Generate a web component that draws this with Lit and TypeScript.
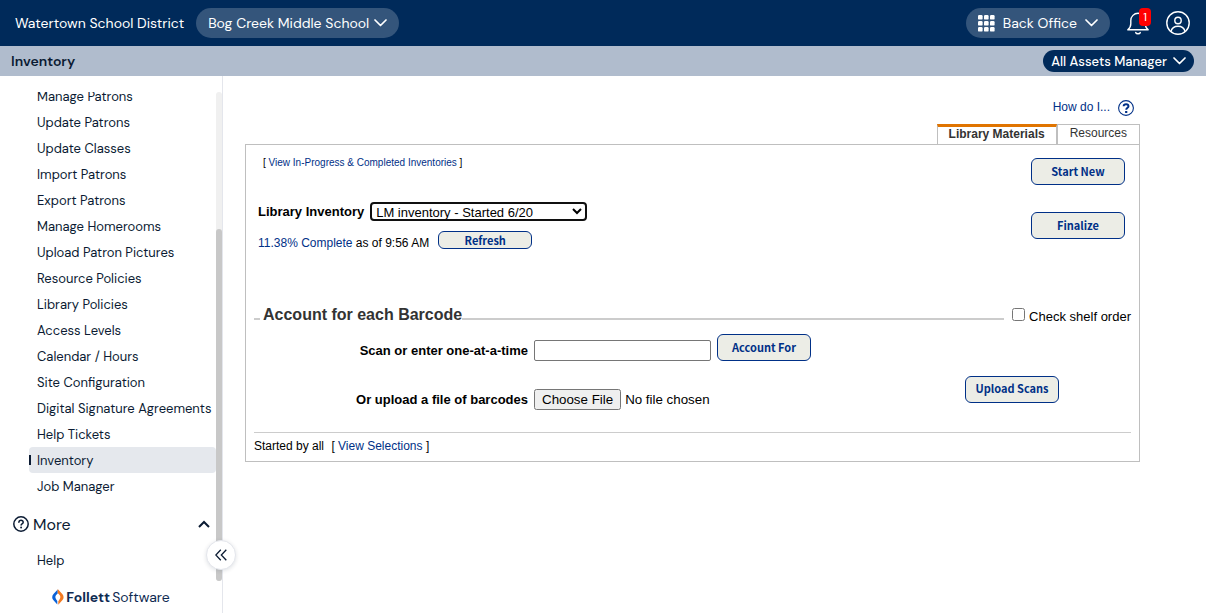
import { LitElement, html, css, svg } from "lit";
import { customElement, property, state } from "lit/decorators.js";
import { classMap } from "lit/directives/class-map.js";

const chevronDown = html`<svg class="chevron" width="13" height="8" viewBox="0 0 13 8" aria-hidden="true">
  <path d="M1 1l5.500 5.500L12 1" fill="none" stroke="currentColor" stroke-width="1.700" stroke-linecap="round" stroke-linejoin="round" />
</svg>`;

const gridDots = [0, 6, 12].map((y) => [0, 6, 12].map((x) => svg`<rect x=${x} y=${y} width="4.600" height="4.600" rx="1.200" />`));

@customElement("app-header")
class AppHeader extends LitElement {
  static styles = css`
    :host {
      display: block;
      font-family: "DM Sans", "Inter", sans-serif;
      font-size: 14px;
      color: #fff;
    }
    .top {
      display: flex;
      align-items: center;
      height: 46px;
      padding: 0 16px 0 15px;
      background: #002a5a;
    }
    .pill {
      display: flex;
      align-items: center;
      gap: 5px;
      height: 30px;
      border: 0;
      border-radius: 15px;
      padding: 0 12px;
      background: #34557b;
      color: inherit;
      font: inherit;
      white-space: nowrap;
    }
    .district { margin-right: 12px; white-space: nowrap; }
    .office { margin-left: auto; gap: 8px; }
    .icon-button {
      position: relative;
      display: flex;
      border: 0;
      padding: 0;
      background: none;
      color: inherit;
    }
    .bell { margin: 0 16px; }
    .badge {
      position: absolute;
      top: -3px;
      right: -1px;
      width: 12px;
      height: 18px;
      border-radius: 4px;
      background: #f00;
      font: 12px/18px "DM Sans", "Inter", sans-serif;
      text-align: center;
    }
    .sub {
      display: flex;
      align-items: center;
      justify-content: space-between;
      height: 30px;
      padding: 0 12px 0 11px;
      background: #b0bccd;
    }
    .title {
      margin: 0;
      color: #0b1b33;
      font-size: 14px;
      font-weight: 600;
    }
    .role {
      gap: 6px;
      height: 22px;
      padding: 0 8px;
      background: #002a5a;
      font-size: 13px;
      font-weight: 500;
    }
  `;

  render() {
    return html`
      <header class="top">
        <span class="district">Watertown School District</span>
        <button class="pill">Bog Creek Middle School ${chevronDown}</button>
        <button class="pill office">
          <svg width="17" height="17" viewBox="0 0 17 17" fill="currentColor" aria-hidden="true">${gridDots}</svg>
          Back Office ${chevronDown}
        </button>
        <button class="icon-button bell" aria-label="Notifications">
          <svg width="24" height="24" viewBox="0 0 24 24" fill="none" stroke="currentColor" stroke-width="1.400" stroke-linecap="round" stroke-linejoin="round" aria-hidden="true">
            <path d="M1.800 18.800h20.400c-1.900-1.500-2.900-3.200-2.900-6V9.500a7.200 7.200 0 0 0-14.500 0v3.300c0 2.800-1.100 4.500-3 6z" />
            <path d="M9.700 21.600c.7 1.500 3.900 1.500 4.600 0" />
          </svg>
          <span class="badge">1</span>
        </button>
        <button class="icon-button" aria-label="Account">
          <svg width="24" height="24" viewBox="0 0 24 24" fill="none" stroke="currentColor" stroke-width="1.400" aria-hidden="true">
            <circle cx="12" cy="12" r="11.200" />
            <circle cx="12" cy="9.500" r="3.200" />
            <path d="M4.900 20.500c.9-3.500 3.600-5.200 7.100-5.200s6.200 1.700 7.100 5.200" />
          </svg>
        </button>
      </header>
      <div class="sub">
        <h1 class="title">Inventory</h1>
        <button class="pill role">All Assets Manager ${chevronDown}</button>
      </div>
    `;
  }
}

@customElement("app-sidebar")
class AppSidebar extends LitElement {
  @property({ type: Array }) items: string[] = [];
  @property() current = "";

  static styles = css`
    :host {
      position: relative;
      display: flex;
      flex-direction: column;
      box-sizing: border-box;
      flex: 0 0 223px;
      border-right: 1px solid #e4e6ec;
      padding-top: 16px;
      font-family: "DM Sans", "Inter", sans-serif;
      font-size: 13px;
      color: #0b1b33;
    }
    .scroller { display: flex; flex: 1; min-height: 0; }
    .nav {
      display: flex;
      flex: 1;
      flex-direction: column;
      justify-content: flex-end;
      overflow: hidden;
      padding-bottom: 8px;
    }
    .list { flex: none; margin: 0 0 0 29px; padding: 0; list-style: none; }
    .link {
      display: flex;
      align-items: center;
      height: 26px;
      padding-left: 8px;
      border-radius: 4px;
      color: inherit;
      text-decoration: none;
      white-space: nowrap;
    }
    .active {
      padding-left: 0;
      background: #e5e8ed;
    }
    .active::before {
      content: "";
      width: 2px;
      height: 10px;
      margin-right: 6px;
      background: #0b1b33;
    }
    .more {
      display: flex;
      flex: none;
      align-items: center;
      gap: 4px;
      height: 36px;
      margin: 7px 0 5px;
      border: 0;
      padding: 0 6px 0 13px;
      background: none;
      color: inherit;
      font: inherit;
      font-size: 16px;
    }
    .up { margin-left: auto; }
    .track {
      display: flex;
      align-items: flex-end;
      width: 6px;
      border-radius: 3px;
      background: #f0f0f0;
    }
    .thumb { width: 6px; height: 72%; border-radius: 3px; background: #c8c8c8; }
    .collapse {
      position: absolute;
      right: -14px;
      bottom: 43px;
      display: flex;
      align-items: center;
      justify-content: center;
      width: 30px;
      height: 30px;
      border: 1px solid #e4e6ec;
      border-radius: 50%;
      padding: 0;
      background: #fff;
      box-shadow: 0 1px 4px #0b1b3322;
      color: #0b1b33;
    }
    .brand {
      display: flex;
      align-items: center;
      justify-content: center;
      gap: 2px;
      height: 32px;
      color: #0f2b52;
      font-size: 14px;
    }
    .bold { font-weight: 700; }
  `;

  render() {
    return html`
      <div class="scroller">
        <nav class="nav">
          <ul class="list">
            ${this.items.map(
              (item) => html`<li><a href="#" class=${classMap({ link: true, active: item === this.current })}>${item}</a></li>`
            )}
          </ul>
          <button class="more">
            <svg width="16" height="16" viewBox="0 0 16 16" fill="none" stroke="currentColor" stroke-width="1.500" stroke-linecap="round" aria-hidden="true">
              <circle cx="8" cy="8" r="7.200" />
              <path d="M5.900 6.300c.2-2.600 4.300-2.600 4.300-.1 0 1.500-2.100 1.600-2.100 2.800" />
              <path d="M8.100 11.500v.1" stroke-width="1.900" />
            </svg>
            More
            <svg class="up" width="12" height="8" viewBox="0 0 12 8" aria-hidden="true">
              <path d="M1 7l5-5 5 5" fill="none" stroke="currentColor" stroke-width="2" />
            </svg>
          </button>
          <ul class="list">
            <li><a class="link" href="#">Help</a></li>
          </ul>
        </nav>
        <div class="track"><div class="thumb"></div></div>
      </div>
      <div class="brand">
        <svg width="12" height="16" viewBox="0 0 12 16" aria-hidden="true">
          <path d="M5.700.6L1.500 4.900c-1.700 2-1.700 4.300-.2 6.200L5.300 15.400V12L4.100 10.200c-1-1.500-1-2.800 0-4.100L5.700 4.400z" fill="#0a62d8" />
          <path d="M5.700 0l4.600 4.900c1.700 2 1.700 4.300.2 6.200L6.300 15.800V12.300l1.300-2.100c1-1.500 1-2.800 0-4.100L5.700 3.900z" fill="#f47a20" />
        </svg>
        <span class="bold">Follett</span><span>Software</span>
      </div>
      <button class="collapse" aria-label="Collapse menu">
        <svg width="12" height="12" viewBox="0 0 12 12" fill="none" stroke="currentColor" stroke-width="1.300" aria-hidden="true">
          <path d="M5.800.7L.8 6l5 5.300M11.300.7L6.300 6l5 5.300" />
        </svg>
      </button>
    `;
  }
}

@customElement("inventory-panel")
class InventoryPanel extends LitElement {
  @state() private tab = "Library Materials";

  static styles = css`
    :host {
      display: block;
      flex: 1;
      min-width: 0;
      padding: 20px 66px 20px 22px;
      font-family: "Liberation Sans", Arial, sans-serif;
      font-size: 12px;
      color: #000;
    }
    a { color: #003087; text-decoration: none; }
    .help {
      display: flex;
      align-items: center;
      justify-content: flex-end;
      gap: 8px;
      height: 22px;
      padding-right: 6px;
    }
    .help-icon { margin-top: 2px; }
    .tabs { display: flex; justify-content: flex-end; margin-top: 6px; }
    .tab {
      height: 20px;
      border: 1px solid #bfbfbf;
      border-bottom: 0;
      padding: 0 12px 4px;
      background: #fff;
      color: #333;
      font: 12px "Liberation Sans", Arial, sans-serif;
    }
    .selected {
      border-top: 3px solid #e07400;
      padding: 0 11px 6px;
      font-weight: 700;
    }
    .panel { border: 1px solid #bfbfbf; padding: 13px 8px 0; }
    .intro { display: flex; justify-content: space-between; padding-right: 6px; }
    .progress { font-size: 10px; line-height: 10px; padding-left: 9px; }
    .chooser { display: flex; align-items: center; gap: 6px; margin: 34px 0 10px 4px; }
    .label { font-size: 13px; font-weight: 700; }
    .select {
      width: 217px;
      height: 19px;
      border: 2px solid #101010;
      border-radius: 4px;
      padding: 0;
      background: #fff;
      color: #000;
      font: 13px "Liberation Sans", Arial, sans-serif;
    }
    .status { display: flex; align-items: flex-end; gap: 9px; margin-left: 4px; line-height: 12px; }
    .actions { display: flex; flex-direction: column; gap: 27px; }
    .button {
      box-sizing: border-box;
      width: 94px;
      height: 27px;
      border: 1px solid #003087;
      border-radius: 6px;
      padding: 0 0 2px;
      background: #ecede6;
      color: #003087;
      font: 700 11px/16px "Noto Sans CJK SC", "Noto Sans", sans-serif;
    }
    .short { height: 18px; padding: 0; }
    .heading { display: flex; align-items: center; height: 24px; margin-top: 52px; }
    .legend { margin: 4px 0 0 3px; color: #333; font-size: 16px; font-weight: 700; }
    .rule { flex: 1; height: 2px; margin-top: 11px; background: #ccc; }
    .lead { flex: 0 0 6px; }
    .shelf { display: flex; align-items: center; gap: 4px; margin: 6px 0 0 8px; font-size: 13px; }
    .check { width: 13px; height: 13px; margin: 0 0 4px; }
    .row {
      display: grid;
      grid-template-columns: 274px auto 1fr;
      align-items: center;
      column-gap: 6px;
      margin-top: 9px;
    }
    .upload { margin-top: 7px; padding-right: 72px; }
    .row .label { text-align: right; }
    .text {
      box-sizing: border-box;
      width: 177px;
      height: 21px;
      border: 1px solid #767676;
      border-radius: 2px;
      margin-top: 6px;
      padding: 1px 2px;
      font: 13px "Liberation Sans", Arial, sans-serif;
    }
    .scan-label { margin-top: 6px; }
    .file { width: 200px; margin-top: 21px; font-family: "Liberation Sans", Arial, sans-serif; }
    .file-label { margin-top: 21px; }
    .end { justify-self: end; }
    .footer {
      margin-top: 22px;
      border-top: 1px solid #ccc;
      padding: 6px 0 8px;
      line-height: 14px;
    }
    .gap { margin-left: 4px; }
  `;

  render() {
    return html`
      <div class="help">
        <a href="#">How do I...</a>
        <svg class="help-icon" width="16" height="16" viewBox="0 0 16 16" fill="none" stroke="#003087" aria-hidden="true">
          <circle cx="8" cy="8" r="7.400" stroke-width="1.100" />
          <path d="M5.600 6.200c.2-2.700 4.900-2.600 4.900 0C10.500 7.700 8.200 7.700 8.200 9.800" stroke-width="1.900" />
          <path d="M7.100 12h2.200" stroke-width="2" />
        </svg>
      </div>
      <div class="tabs" role="tablist">
        ${["Library Materials", "Resources"].map(
          (name) => html`<button
            role="tab"
            class=${classMap({ tab: true, selected: name === this.tab })}
            aria-selected=${name === this.tab}
            @click=${() => (this.tab = name)}
          >${name}</button>`
        )}
      </div>
      <section class="panel">
        <div class="intro">
          <div>
            <div class="progress">[ <a href="#">View In-Progress &amp; Completed Inventories</a> ]</div>
            <div class="chooser">
              <label class="label" for="inventory">Library Inventory</label>
              <select class="select" id="inventory">
                <option>LM inventory - Started 6/20</option>
              </select>
            </div>
            <div class="status">
              <span><a href="#">11.38% Complete</a> as of 9:56 AM</span>
              <button class="button short">Refresh</button>
            </div>
          </div>
          <div class="actions">
            <button class="button">Start New</button>
            <button class="button">Finalize</button>
          </div>
        </div>
        <div class="heading">
          <span class="rule lead"></span>
          <h2 class="legend">Account for each Barcode</h2>
          <span class="rule"></span>
          <label class="shelf"><input class="check" type="checkbox" />Check shelf order</label>
        </div>
        <div class="row">
          <label class="label scan-label" for="barcode">Scan or enter one-at-a-time</label>
          <input class="text" id="barcode" type="text" />
          <button class="button">Account For</button>
        </div>
        <div class="row upload">
          <label class="label file-label" for="file">Or upload a file of barcodes</label>
          <input class="file" id="file" type="file" />
          <button class="button end">Upload Scans</button>
        </div>
        <div class="footer">Started by all <span class="gap">[ <a href="#">View Selections</a> ]</span></div>
      </section>
    `;
  }
}

@customElement("app-root")
class AppRoot extends LitElement {
  static styles = css`
    :host {
      display: flex;
      flex-direction: column;
      height: 100vh;
      background: #fff;
    }
    .body { display: flex; flex: 1; min-height: 0; }
  `;

  private items = [
    "Manage Patrons",
    "Update Patrons",
    "Update Classes",
    "Import Patrons",
    "Export Patrons",
    "Manage Homerooms",
    "Upload Patron Pictures",
    "Resource Policies",
    "Library Policies",
    "Access Levels",
    "Calendar / Hours",
    "Site Configuration",
    "Digital Signature Agreements",
    "Help Tickets",
    "Inventory",
    "Job Manager",
  ];

  render() {
    return html`
      <app-header></app-header>
      <div class="body">
        <app-sidebar .items=${this.items} current="Inventory"></app-sidebar>
        <inventory-panel></inventory-panel>
      </div>
    `;
  }
}
